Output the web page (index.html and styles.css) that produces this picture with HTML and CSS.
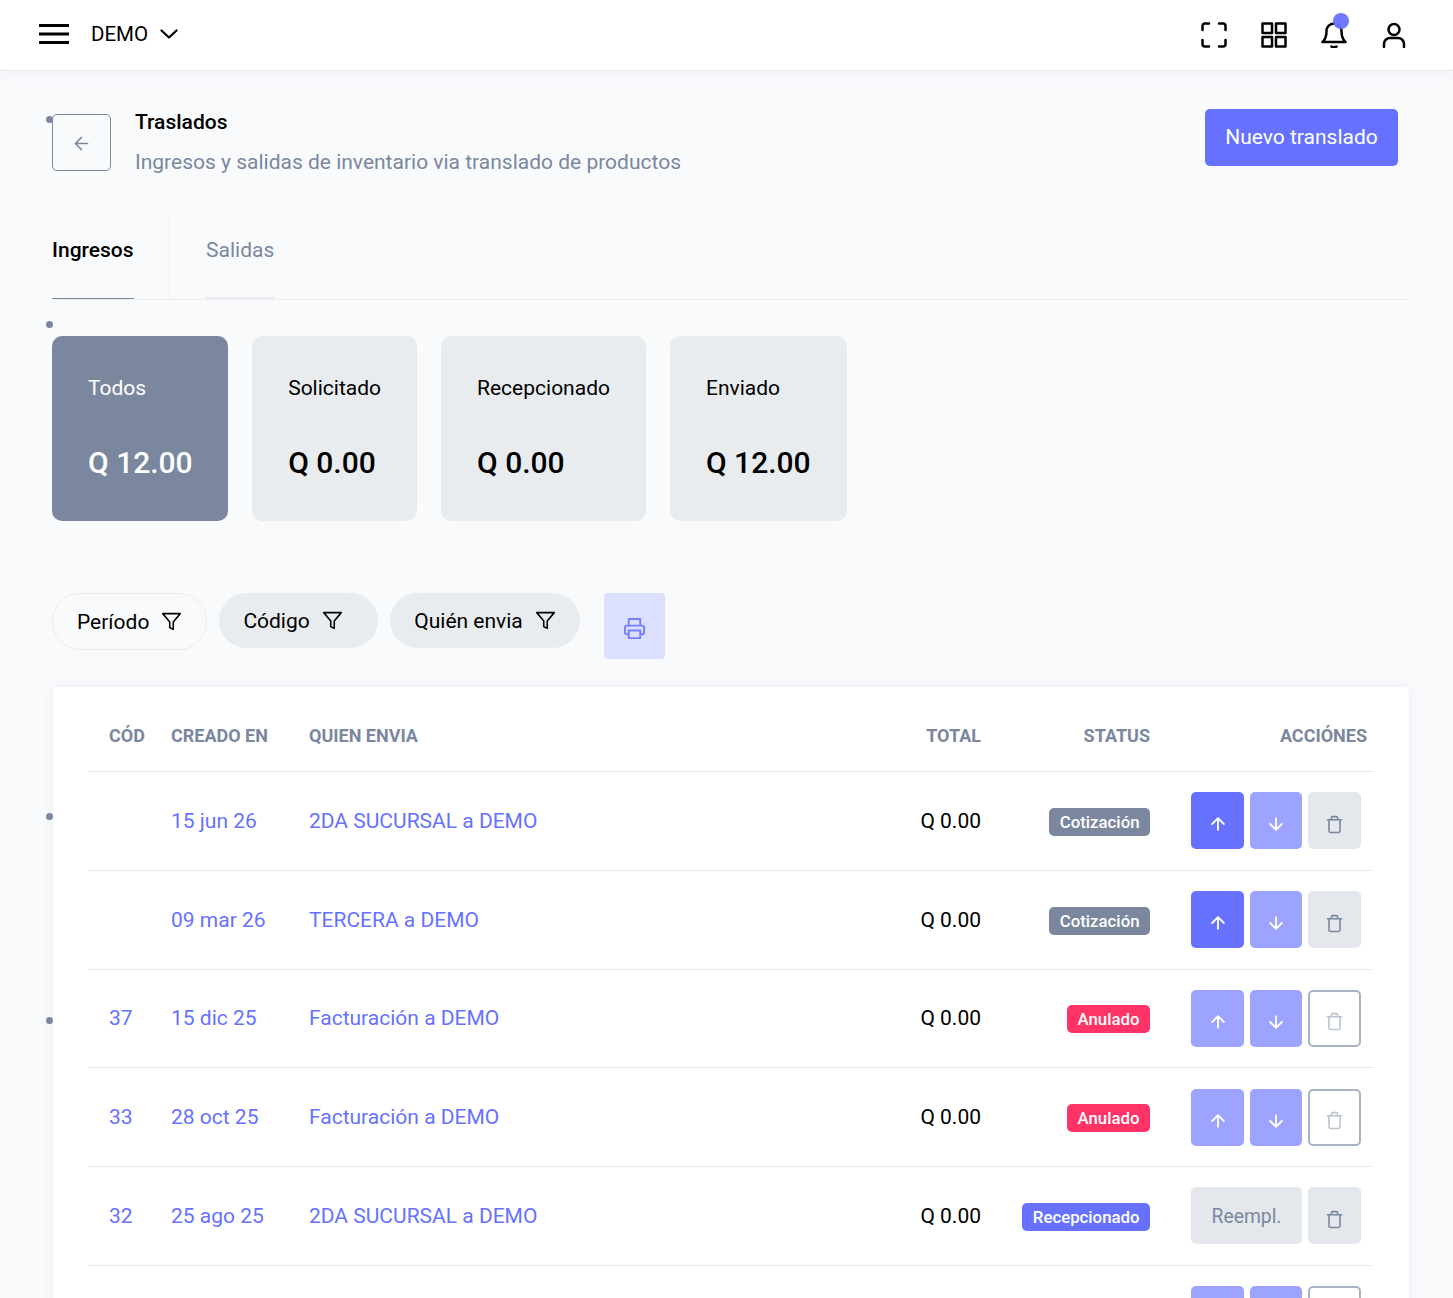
FILE: index.html
```html
<!DOCTYPE html>
<html lang="es">
<head>
    <meta charset="UTF-8">
    <meta name="viewport" content="width=device-width, initial-scale=1.0">
    <title>Traslados</title>
    <link rel="stylesheet" href="styles.css">
</head>
<body>
    <svg class="icon-defs" aria-hidden="true">
        <symbol id="i-filter" viewBox="0 0 24 24"><path d="M22 3H2l8 9.46V19l4 2v-8.54L22 3z"/></symbol>
        <symbol id="i-up" viewBox="0 0 24 24"><path d="M12 19V5M5 12l7-7 7 7"/></symbol>
        <symbol id="i-down" viewBox="0 0 24 24"><path d="M12 5v14M19 12l-7 7-7-7"/></symbol>
        <symbol id="i-trash" viewBox="0 0 24 24"><path d="M3 6h18M19 6v14a2 2 0 0 1-2 2H7a2 2 0 0 1-2-2V6m3 0V4a2 2 0 0 1 2-2h4a2 2 0 0 1 2 2v2"/></symbol>
    </svg>

    <header class="top-bar">
        <div class="top-left">
            <svg class="menu-icon" viewBox="0 0 30 20"><path d="M0 1.500h30M0 10h30M0 18.500h30"/></svg>
            <span class="company">DEMO</span>
            <svg class="chevron" viewBox="0 0 18 10"><path d="M1.500 1.500 9 8.500l7.500-7"/></svg>
        </div>
        <div class="top-right">
            <svg class="top-icon" viewBox="0 0 26 26"><path d="M1.500 8V4a2.500 2.500 0 0 1 2.500-2.500h4M18 1.500h4A2.500 2.500 0 0 1 24.500 4v4M24.500 18v4a2.500 2.500 0 0 1-2.500 2.500h-4M8 24.500H4A2.500 2.500 0 0 1 1.500 22v-4"/></svg>
            <svg class="top-icon" viewBox="0 0 26 26"><path d="M1.500 1.500h9.500V11H1.500zM15 1.500h9.500V11H15zM15 15h9.500v9.500H15zM1.500 15h9.500v9.500H1.500z"/></svg>
            <div class="bell">
                <svg class="top-icon" viewBox="0 0 26 26"><path d="M20.500 9a7.500 7.500 0 0 0-15 0c0 8-3.500 10.500-4 11h23c-.5-.5-4-3-4-11zM10.500 24.500c1 1 4 1 5 0"/></svg>
                <span class="bell-dot"></span>
            </div>
            <svg class="top-icon" viewBox="0 0 26 26"><circle cx="13" cy="7.500" r="5.500"/><path d="M3 25v-3a6 6 0 0 1 6-6h8a6 6 0 0 1 6 6v3"/></svg>
        </div>
    </header>

    <main class="page">
        <span class="dot dot-1"></span>
        <span class="dot dot-2"></span>
        <span class="dot dot-3"></span>
        <span class="dot dot-4"></span>

        <section class="page-head">
            <a href="#" class="back-button">
                <svg viewBox="0 0 24 24"><path d="M19 12H5M12 19l-7-7 7-7"/></svg>
            </a>
            <div class="page-title">
                <h1>Traslados</h1>
                <p>Ingresos y salidas de inventario via translado de productos</p>
            </div>
            <button class="new-button">Nuevo translado</button>
        </section>

        <nav class="tabs">
            <a href="#" class="tab tab-active">Ingresos</a>
            <a href="#" class="tab">Salidas</a>
        </nav>

        <section class="summary">
            <div class="summary-card summary-active">
                <div class="summary-label">Todos</div>
                <div class="summary-value">Q 12.00</div>
            </div>
            <div class="summary-card">
                <div class="summary-label">Solicitado</div>
                <div class="summary-value">Q 0.00</div>
            </div>
            <div class="summary-card">
                <div class="summary-label">Recepcionado</div>
                <div class="summary-value">Q 0.00</div>
            </div>
            <div class="summary-card">
                <div class="summary-label">Enviado</div>
                <div class="summary-value">Q 12.00</div>
            </div>
        </section>

        <section class="filters">
            <button class="filter filter-outline">Período <svg class="filter-icon"><use href="#i-filter"/></svg></button>
            <button class="filter filter-wide">Código <svg class="filter-icon"><use href="#i-filter"/></svg></button>
            <button class="filter filter-last">Quién envia <svg class="filter-icon"><use href="#i-filter"/></svg></button>
            <button class="print-button">
                <svg viewBox="0 0 24 24"><path d="M6 9V2h12v7M6 18H4a2 2 0 0 1-2-2v-5a2 2 0 0 1 2-2h16a2 2 0 0 1 2 2v5a2 2 0 0 1-2 2h-2M6 14h12v8H6z"/></svg>
            </button>
        </section>

        <section class="table-card">
            <table class="moves">
                <thead>
                    <tr>
                        <th class="col-code">CÓD</th>
                        <th class="col-date">CREADO EN</th>
                        <th>QUIEN ENVIA</th>
                        <th class="col-total">TOTAL</th>
                        <th class="col-status">STATUS</th>
                        <th class="col-actions">ACCIÓNES</th>
                    </tr>
                </thead>
                <tbody>
                    <tr>
                        <td class="link"></td>
                        <td class="link">15 jun 26</td>
                        <td class="link">2DA SUCURSAL a DEMO</td>
                        <td class="col-total">Q 0.00</td>
                        <td class="col-status"><span class="badge badge-gray">Cotización</span></td>
                        <td class="cell-actions">
                            <div class="actions">
                                <button class="act act-up"><svg><use href="#i-up"/></svg></button>
                                <button class="act act-down act-soft"><svg><use href="#i-down"/></svg></button>
                                <button class="act act-trash"><svg><use href="#i-trash"/></svg></button>
                            </div>
                        </td>
                    </tr>
                    <tr>
                        <td class="link"></td>
                        <td class="link">09 mar 26</td>
                        <td class="link">TERCERA a DEMO</td>
                        <td class="col-total">Q 0.00</td>
                        <td class="col-status"><span class="badge badge-gray">Cotización</span></td>
                        <td class="cell-actions">
                            <div class="actions">
                                <button class="act act-up"><svg><use href="#i-up"/></svg></button>
                                <button class="act act-down act-soft"><svg><use href="#i-down"/></svg></button>
                                <button class="act act-trash"><svg><use href="#i-trash"/></svg></button>
                            </div>
                        </td>
                    </tr>
                    <tr>
                        <td class="link">37</td>
                        <td class="link">15 dic 25</td>
                        <td class="link">Facturación a DEMO</td>
                        <td class="col-total">Q 0.00</td>
                        <td class="col-status"><span class="badge badge-red">Anulado</span></td>
                        <td class="cell-actions">
                            <div class="actions">
                                <button class="act act-up act-soft"><svg><use href="#i-up"/></svg></button>
                                <button class="act act-down act-soft"><svg><use href="#i-down"/></svg></button>
                                <button class="act act-trash-off"><svg><use href="#i-trash"/></svg></button>
                            </div>
                        </td>
                    </tr>
                    <tr>
                        <td class="link">33</td>
                        <td class="link">28 oct 25</td>
                        <td class="link">Facturación a DEMO</td>
                        <td class="col-total">Q 0.00</td>
                        <td class="col-status"><span class="badge badge-red">Anulado</span></td>
                        <td class="cell-actions">
                            <div class="actions">
                                <button class="act act-up act-soft"><svg><use href="#i-up"/></svg></button>
                                <button class="act act-down act-soft"><svg><use href="#i-down"/></svg></button>
                                <button class="act act-trash-off"><svg><use href="#i-trash"/></svg></button>
                            </div>
                        </td>
                    </tr>
                    <tr>
                        <td class="link">32</td>
                        <td class="link">25 ago 25</td>
                        <td class="link">2DA SUCURSAL a DEMO</td>
                        <td class="col-total">Q 0.00</td>
                        <td class="col-status"><span class="badge badge-blue">Recepcionado</span></td>
                        <td class="cell-actions">
                            <div class="actions">
                                <button class="act act-replace">Reempl.</button>
                                <button class="act act-trash"><svg><use href="#i-trash"/></svg></button>
                            </div>
                        </td>
                    </tr>
                    <tr>
                        <td></td>
                        <td></td>
                        <td></td>
                        <td></td>
                        <td></td>
                        <td class="cell-actions">
                            <div class="actions">
                                <button class="act act-up act-soft"><svg><use href="#i-up"/></svg></button>
                                <button class="act act-down act-soft"><svg><use href="#i-down"/></svg></button>
                                <button class="act act-trash-off"><svg><use href="#i-trash"/></svg></button>
                            </div>
                        </td>
                    </tr>
                </tbody>
            </table>
        </section>
    </main>
</body>
</html>
```

FILE: styles.css
```css
* {
    margin: 0;
    padding: 0;
    box-sizing: border-box;
}

html, body {
    height: 100%;
    overflow: hidden;
}

body {
    background-color: #f9fafc;
    color: #000;
    font-family: Roboto, "Liberation Sans", sans-serif;
    font-size: 21px;
}

button {
    font-family: inherit;
    border: none;
    cursor: pointer;
}

a {
    text-decoration: none;
    color: inherit;
}

svg {
    fill: none;
    stroke: currentColor;
    stroke-width: 2;
    stroke-linecap: round;
    stroke-linejoin: round;
}

.icon-defs {
    display: none;
}

/* top bar */
.top-bar {
    height: 71px;
    background-color: #fff;
    border-bottom: 1px solid #e9ebf0;
    box-shadow: 0 2px 14px rgba(120, 130, 160, 0.08);
    padding: 0 46px 2px 39px;
    display: flex;
    justify-content: space-between;
    align-items: center;
}

.top-left {
    display: flex;
    align-items: center;
}

.menu-icon {
    width: 30px;
    height: 20px;
    stroke-width: 3;
    stroke-linecap: butt;
    margin-right: 22px;
}

.company {
    font-size: 20.500px;
    margin-right: 12px;
}

.chevron {
    width: 18px;
    height: 10px;
    stroke-width: 2.200;
}

.top-right {
    display: flex;
    gap: 34px;
    align-items: center;
    margin-top: 2px;
}

.top-icon {
    width: 26px;
    height: 26px;
    display: block;
    stroke-width: 2.500;
}

.bell {
    position: relative;
}

.bell-dot {
    position: absolute;
    top: -9px;
    left: 12px;
    width: 16px;
    height: 16px;
    border-radius: 50%;
    background-color: rgba(102, 114, 255, 0.95);
}

/* page */
.page {
    position: relative;
    padding: 38px 43px 0 52px;
}

.dot {
    position: absolute;
    left: 46px;
    width: 7px;
    height: 7px;
    border-radius: 50%;
    background-color: #7a879f;
}

.dot-1 { top: 45px; }
.dot-2 { top: 249.500px; }
.dot-3 { top: 741.500px; }
.dot-4 { top: 945.500px; }

.page-head {
    display: flex;
    align-items: flex-start;
    height: 104px;
    padding-right: 12px;
}

.back-button {
    width: 59px;
    height: 57px;
    margin-top: 5px;
    padding-top: 1px;
    border: 1px solid #7a879f;
    border-radius: 5px;
    color: #7a879f;
    display: flex;
    align-items: center;
    justify-content: center;
}

.back-button svg {
    width: 21px;
    height: 21px;
    stroke-width: 1.700;
}

.page-title {
    flex: 1;
    margin-left: 24px;
}

.page-title h1 {
    font-size: 21px;
    font-weight: 500;
    line-height: 26px;
}

.page-title p {
    color: #7a879f;
    line-height: 26px;
    margin-top: 14px;
}

.new-button {
    width: 193px;
    height: 57px;
    padding-bottom: 2px;
    background-color: #6672ff;
    color: #fff;
    font-size: 21px;
    border-radius: 5px;
}

.tabs {
    display: flex;
    height: 87px;
    border-bottom: 1px solid #ebedf1;
}

.tab {
    color: #7a879f;
    line-height: 74px;
    height: 86px;
    margin-right: 72.500px;
    border-bottom: 2px solid #ebedf1;
}

.tab-active {
    color: #000;
    font-weight: 500;
    border-bottom: 1px solid #7a879f;
    position: relative;
}

.tab-active::after {
    content: "";
    position: absolute;
    top: 1px;
    bottom: -1px;
    right: -36px;
    width: 1px;
    background-color: #ebedf1;
}

.summary {
    display: flex;
    gap: 24px;
    margin-top: 36px;
}

.summary-card {
    height: 185px;
    padding: 38px 36px 0;
    background-color: #e9ecef;
    border-radius: 10px;
}

.summary-active {
    padding-right: 35.500px;
    background-color: #7a879f;
    color: #fff;
}

.summary-label {
    font-size: 21px;
    line-height: 28px;
}

.summary-value {
    font-size: 30px;
    font-weight: 500;
    line-height: 38px;
    margin-top: 42px;
}

/* filters */
.filters {
    display: flex;
    align-items: flex-start;
    gap: 12px;
    margin-top: 72px;
}

.filter {
    height: 55px;
    padding: 0 25px 0 24px;
    border-radius: 28px;
    background-color: #e9ecef;
    color: #000;
    font-size: 21px;
    display: flex;
    align-items: center;
    gap: 12px;
}

.filter-outline {
    height: 57px;
    padding-right: 24px;
    background-color: transparent;
    border: 1px solid #e9ecef;
}

.filter-wide {
    padding-right: 35px;
}

.filter-last {
    margin-right: 12px;
    padding-left: 24.500px;
    padding-right: 24.500px;
}

.filter-icon {
    width: 21px;
    height: 21px;
    stroke-width: 1.800;
}

.print-button {
    width: 61px;
    height: 66px;
    border-radius: 4px;
    background-color: #dcdffd;
    color: #7580ff;
    padding-top: 8px;
}

.print-button svg {
    width: 23px;
    height: 23px;
    stroke-width: 2;
}

/* table */
.table-card {
    margin: 28px 1px 0 1px;
    padding: 0 36px 0 35px;
    background-color: #fff;
    border-radius: 5px;
    box-shadow: 0 0 12px rgba(120, 130, 160, 0.1);
}

.moves {
    width: 100%;
    border-collapse: collapse;
    table-layout: fixed;
}

.moves th {
    height: 84.500px;
    padding: 13px 20px 0;
    font-size: 18px;
    font-weight: 700;
    color: #7a879f;
    text-align: left;
    border-bottom: 1px solid #e9ebf0;
}

.moves td {
    height: 98.750px;
    padding: 0 20px;
    border-bottom: 1px solid #e9ebf0;
}

.moves .col-code {
    width: 63px;
    padding-left: 21px;
}

.moves td:first-child {
    padding-left: 21px;
}

.moves .col-date {
    width: 138px;
}

.moves .col-total {
    width: 169px;
    text-align: right;
}

.moves .col-status {
    width: 169px;
    text-align: right;
}

.moves .col-actions {
    width: 203px;
    text-align: right;
    padding-right: 6px;
}

.moves .cell-actions {
    padding: 0 0 0 21px;
}

.link {
    color: #6672ff;
}

.badge {
    display: inline-block;
    height: 28px;
    margin-top: 2px;
    line-height: 28px;
    padding: 0 10.500px;
    border-radius: 5px;
    color: #fff;
    font-size: 16.800px;
    font-weight: 500;
    vertical-align: middle;
}

.badge-gray { background-color: #7a879f; }
.badge-red { background-color: #ff3366; }
.badge-blue { background-color: #6672ff; }

.actions {
    display: flex;
    gap: 6px;
}

.act {
    flex: none;
    width: 53px;
    height: 57px;
    border-radius: 5px;
    color: #fff;
    padding-top: 7px;
}

.act svg {
    display: block;
    width: 20px;
    height: 20px;
    margin: 0 auto;
    stroke-width: 2.200;
}

.act-up { background-color: #6672ff; }
.act-down { width: 52px; }
.act-soft { background-color: #9ca4ff; }

.act-trash {
    background-color: #e4e7ec;
    color: #7a879f;
}

.act-trash svg,
.act-trash-off svg {
    width: 19px;
    height: 19px;
    stroke-width: 2;
}

.act-trash-off {
    background-color: #fff;
    border: 2px solid #a9b2c3;
    color: #bcc3d0;
}

.act-replace {
    width: 111px;
    padding-top: 2px;
    background-color: #e4e7ec;
    color: #7a879f;
    font-size: 19.300px;
}
```
